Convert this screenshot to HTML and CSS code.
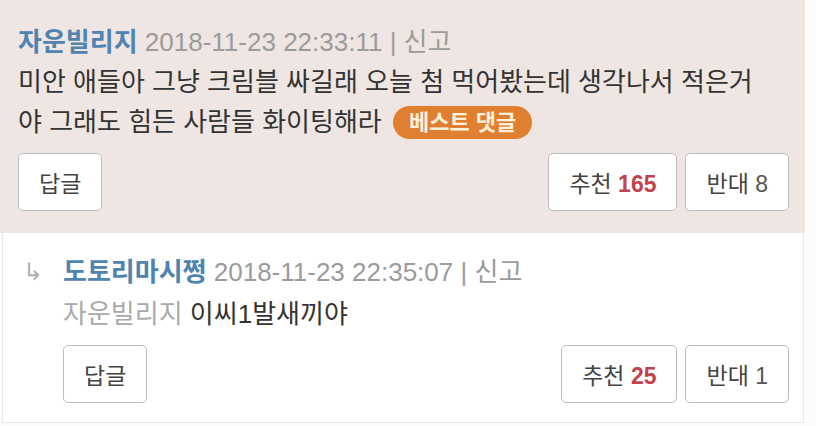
FILE: index.html
```html
<!DOCTYPE html>
<html>
<head>
    <meta charset="UTF-8">
    <title>댓글</title>
    <link rel="stylesheet" href="styles.css">
</head>
<body>
    <div class="comment best">
        <div class="comment-head">
            <span class="nick">자운빌리지</span>
            <span class="meta">2018-11-23 22:33:11 | 신고</span>
        </div>
        <div class="comment-body">
            미안 애들아 그냥 크림블 싸길래 오늘 첨 먹어봤는데 생각나서 적은거<br>
            야 그래도 힘든 사람들 화이팅해라 <span class="badge">베스트 댓글</span>
        </div>
        <div class="comment-actions">
            <button class="btn">답글</button>
            <div class="votes">
                <button class="btn">추천 <b class="up">165</b></button>
                <button class="btn">반대 <span class="down">8</span></button>
            </div>
        </div>
    </div>

    <div class="comment reply">
        <div class="reply-arrow">↳</div>
        <div class="reply-main">
            <div class="comment-head">
                <span class="nick">도토리마시쩡</span>
                <span class="meta">2018-11-23 22:35:07 | 신고</span>
            </div>
            <div class="comment-body">
                <span class="target">자운빌리지</span> 이씨1발새끼야
            </div>
            <div class="comment-actions">
                <button class="btn">답글</button>
                <div class="votes">
                    <button class="btn">추천 <b class="up">25</b></button>
                    <button class="btn">반대 <span class="down">1</span></button>
                </div>
            </div>
        </div>
    </div>
</body>
</html>
```

FILE: styles.css
```css
body {
    margin: 0;
    background: #fcfcfc;
    font-family: "Liberation Sans", "Noto Sans CJK KR", sans-serif;
    color: #333;
}

.comment {
    font-size: 26px;
}

.best {
    width: 805px;
    box-sizing: border-box;
    padding: 22px 16px 22px 18px;
    background: #efe6e3;
}

.comment-head {
    line-height: 40px;
}
.nick {
    color: #4f83b0;
    font-weight: bold;
}
.meta {
    color: #9b9b9b;
}

.comment-body {
    line-height: 40px;
    color: #333;
}

.badge {
    display: inline-block;
    margin-left: 4px;
    padding: 0 16px;
    line-height: 33px;
    border-radius: 17px;
    background: #e17f30;
    color: #fdf1dc;
    font-size: 22px;
    font-weight: bold;
    vertical-align: 1px;
}

.comment-actions {
    display: flex;
    justify-content: space-between;
    margin-top: 11px;
}
.votes {
    display: flex;
    gap: 8px;
}

.btn {
    height: 58px;
    padding: 0 20px;
    border: 1px solid #bdbdbd;
    border-radius: 5px;
    background: #fff;
    font-family: inherit;
    font-size: 23px;
    color: #444;
}
.up {
    color: #c2434e;
}
.down {
    color: #555;
}

.reply {
    display: flex;
    width: 802px;
    box-sizing: border-box;
    margin-left: 2px;
    padding: 18px 14px 19px 0;
    background: #fff;
    border: 1px solid #e8e8e8;
    border-top: none;
}
.reply-arrow {
    width: 60px;
    padding-left: 20px;
    box-sizing: border-box;
    line-height: 42px;
    color: #b0b0b0;
    font-size: 24px;
}
.reply-main {
    flex: 1;
}
.reply .comment-head,
.reply .comment-body {
    line-height: 42px;
}
.reply .comment-actions {
    margin-top: 10px;
}
.target {
    color: #aaa;
}
```
